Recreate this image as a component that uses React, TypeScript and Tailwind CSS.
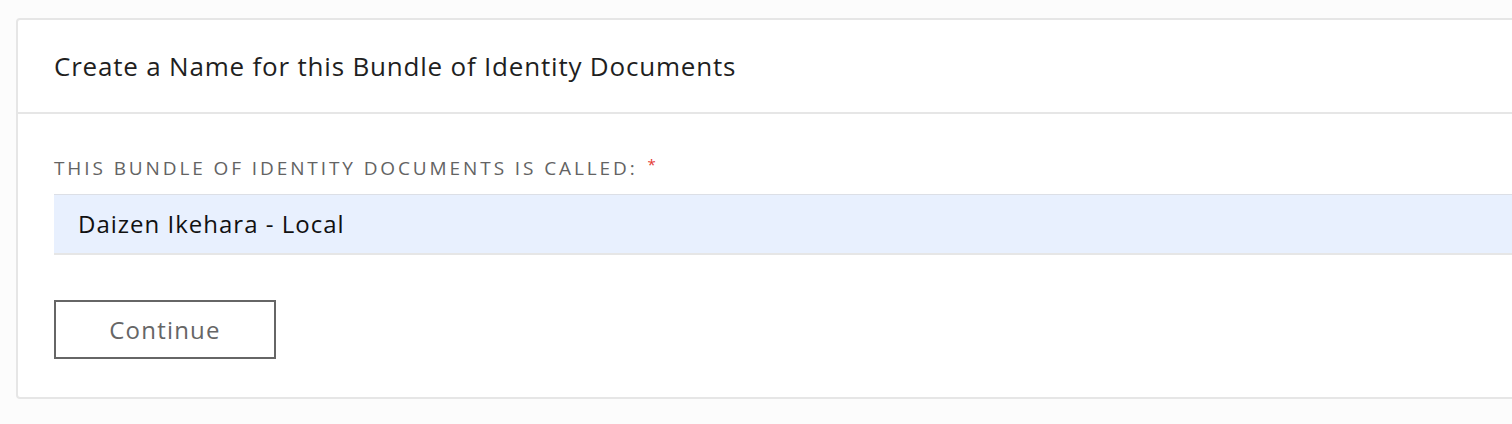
export default function App() {
  return (
    <div className="min-h-[424px] w-full overflow-hidden bg-[#fcfcfc] pt-[18px] pl-4 font-['Open_Sans',sans-serif]">
      <div className="w-[1600px] rounded-[4px] border-2 border-[#e6e6e6] bg-white">
        <div className="flex h-[94px] items-center border-b-2 border-[#e6e6e6] px-9">
          <h1 className="text-[26px] leading-none tracking-[0.8px] text-[#1f1f1f]">
            Create a Name for this Bundle of Identity Documents
          </h1>
        </div>
        <div className="px-9 pt-[42px] pb-[38px]">
          <label className="flex items-start text-[19px] leading-6 tracking-[2.9px] text-[#636363] uppercase">
            This Bundle of Identity Documents is called:
            <span className="ml-[10px] text-[15px] leading-4 text-[#e53935]">*</span>
          </label>
          <div className="mt-[14px] flex h-[61px] items-center border-t border-b-2 border-t-[#dcdfe6] border-b-[#e6e6e6] bg-[#e8f0fe] pl-6 text-[24px] tracking-[1px] text-[#111]">
            Daizen Ikehara - Local
          </div>
          <button className="mt-[45px] flex h-[59px] w-[222px] items-center justify-center border-2 border-[#666] bg-white text-[24px] tracking-[1.2px] text-[#666]">
            Continue
          </button>
        </div>
      </div>
    </div>
  );
}
